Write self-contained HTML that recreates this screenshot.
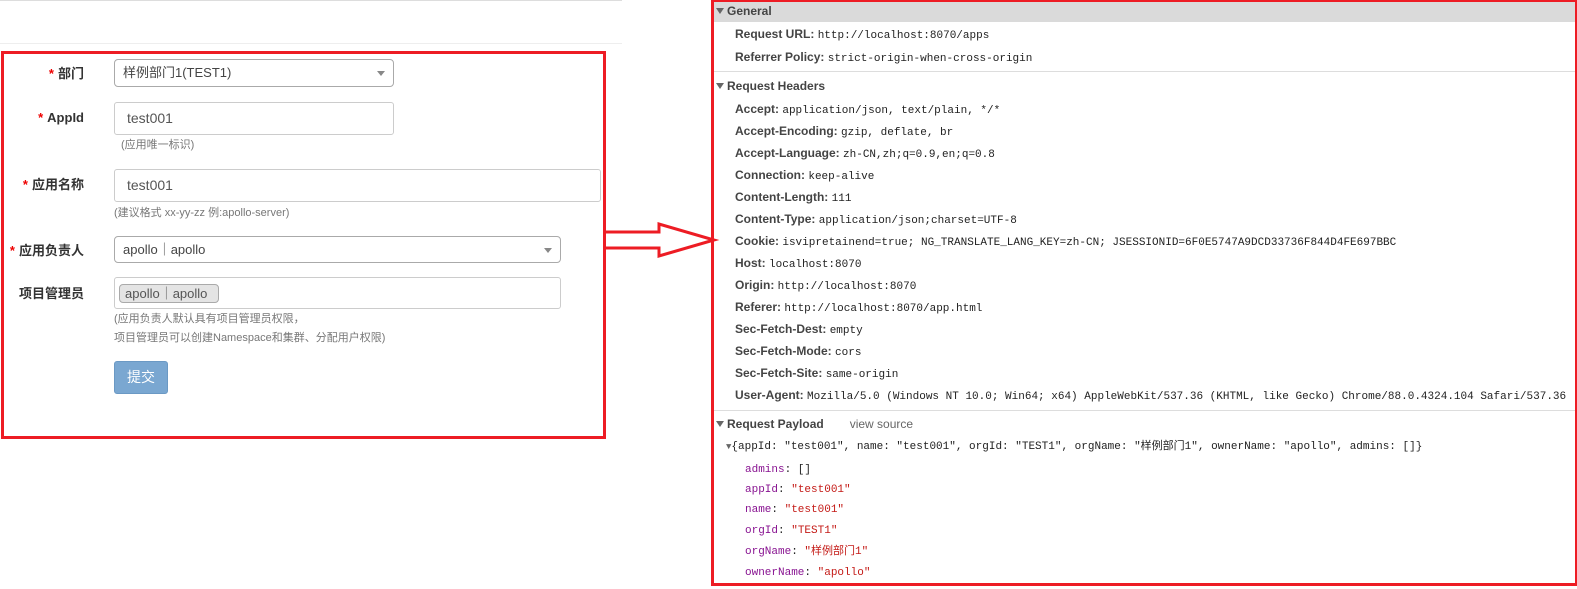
<!DOCTYPE html>
<html><head><meta charset="utf-8"><style>
*{margin:0;padding:0;box-sizing:border-box}
body{width:1577px;height:589px;background:#fff;position:relative;overflow:hidden;font-family:"Liberation Sans","Noto Sans CJK SC",sans-serif;color:#333}
.a{position:absolute;white-space:nowrap}
.lab{position:absolute;right:1493px;font-size:13px;font-weight:bold;color:#333;text-align:right;line-height:16px}
.lab b{color:#e00;margin-right:4px}
.inp{position:absolute;border:1px solid #ccc;border-radius:3px;background:#fff;font-size:14px;color:#555;padding-left:12px}
.sel{position:absolute;border:1px solid #aaa;border-radius:4px;background:#fff;font-size:13px;color:#444;padding-left:8px}
.sel:after{content:"";position:absolute;right:8px;top:11px;border:4px solid transparent;border-top:5px solid #888}
.hint{position:absolute;font-size:11px;color:#777;left:114px;white-space:nowrap;line-height:14px}
.r{position:absolute;left:735px;font-size:12px;color:#303942;white-space:nowrap;line-height:15px}
.r b{font-weight:bold;color:#444}
.r span{font-family:"Liberation Mono","Noto Sans CJK SC",monospace;font-size:11px;color:#222}
.h{position:absolute;left:716px;font-size:12px;font-weight:bold;color:#444;white-space:nowrap;line-height:15px}
.h:before{content:"";display:inline-block;border:4px solid transparent;border-top:6px solid #666;margin-right:3px;vertical-align:-3px}
.p{position:absolute;left:745px;font-family:"Liberation Mono","Noto Sans CJK SC",monospace;font-size:11px;white-space:nowrap;color:#222;line-height:15px;height:15px}
.k{color:#881391}.s{color:#c41a16}
</style></head><body>
<div class="a" style="left:0;top:0;width:622px;height:1px;background:#ddd"></div>
<div class="a" style="left:0;top:43px;width:622px;height:1px;background:#eee"></div>
<div class="a" style="left:1px;top:51px;width:605px;height:388px;border:3px solid #ed1c24"></div>

<div class="lab" style="top:66px"><b>*</b>部门</div>
<div class="sel" style="left:114px;top:59px;width:280px;height:28px;line-height:26px">样例部门1(TEST1)</div>
<div class="lab" style="top:110px"><b>*</b>AppId</div>
<div class="inp" style="left:114px;top:102px;width:280px;height:33px;line-height:31px">test001</div>
<div class="hint" style="left:121px;top:138px">(应用唯一标识)</div>
<div class="lab" style="top:177px"><b>*</b>应用名称</div>
<div class="inp" style="left:114px;top:169px;width:487px;height:33px;line-height:31px">test001</div>
<div class="hint" style="top:206px">(建议格式 xx-yy-zz 例:apollo-server)</div>
<div class="lab" style="top:243px"><b>*</b>应用负责人</div>
<div class="sel" style="left:114px;top:236px;width:447px;height:27px;line-height:25px">apollo｜apollo</div>
<div class="lab" style="top:286px">项目管理员</div>
<div class="inp" style="left:114px;top:277px;width:447px;height:32px"></div>
<div class="a" style="left:119px;top:284px;width:100px;height:19px;border:1px solid #aaa;border-radius:4px;background:#e4e4e4;font-size:13px;color:#555;line-height:17px;padding-left:5px">apollo｜apollo</div>
<div class="hint" style="top:312px">(应用负责人默认具有项目管理员权限，</div>
<div class="hint" style="top:331px">项目管理员可以创建Namespace和集群、分配用户权限)</div>
<div class="a" style="left:114px;top:361px;width:54px;height:33px;background:#7aa7d1;border:1px solid #6b99c4;border-radius:3px;color:#fff;font-size:14px;text-align:center;line-height:31px">提交</div>

<svg class="a" style="left:600px;top:215px" width="120" height="50"><path d="M5 17 H59 V9 L114 25 L59 41 V33 H5" fill="none" stroke="#ed1c24" stroke-width="3"/></svg>

<div class="a" style="left:711px;top:0;width:866px;height:586px;border:3px solid #ed1c24;border-right-width:2px"></div>
<div class="a" style="left:714px;top:2px;width:861px;height:20px;background:#dadada"></div>
<div class="a" style="left:714px;top:71px;width:861px;height:1px;background:#ddd"></div>
<div class="a" style="left:714px;top:410px;width:861px;height:1px;background:#ddd"></div>
<div class="h" style="top:4px">General</div>
<div class="r" style="top:27px"><b>Request URL:</b> <span>http://localhost:8070/apps</span></div>
<div class="r" style="top:50px"><b>Referrer Policy:</b> <span>strict-origin-when-cross-origin</span></div>
<div class="h" style="top:79px">Request Headers</div>
<div class="r" style="top:102px"><b>Accept:</b> <span>application/json, text/plain, */*</span></div>
<div class="r" style="top:124px"><b>Accept-Encoding:</b> <span>gzip, deflate, br</span></div>
<div class="r" style="top:146px"><b>Accept-Language:</b> <span>zh-CN,zh;q=0.9,en;q=0.8</span></div>
<div class="r" style="top:168px"><b>Connection:</b> <span>keep-alive</span></div>
<div class="r" style="top:190px"><b>Content-Length:</b> <span>111</span></div>
<div class="r" style="top:212px"><b>Content-Type:</b> <span>application/json;charset=UTF-8</span></div>
<div class="r" style="top:234px"><b>Cookie:</b> <span>isvipretainend=true; NG_TRANSLATE_LANG_KEY=zh-CN; JSESSIONID=6F0E5747A9DCD33736F844D4FE697BBC</span></div>
<div class="r" style="top:256px"><b>Host:</b> <span>localhost:8070</span></div>
<div class="r" style="top:278px"><b>Origin:</b> <span>http://localhost:8070</span></div>
<div class="r" style="top:300px"><b>Referer:</b> <span>http://localhost:8070/app.html</span></div>
<div class="r" style="top:322px"><b>Sec-Fetch-Dest:</b> <span>empty</span></div>
<div class="r" style="top:344px"><b>Sec-Fetch-Mode:</b> <span>cors</span></div>
<div class="r" style="top:366px"><b>Sec-Fetch-Site:</b> <span>same-origin</span></div>
<div class="r" style="top:388px"><b>User-Agent:</b> <span>Mozilla/5.0 (Windows NT 10.0; Win64; x64) AppleWebKit/537.36 (KHTML, like Gecko) Chrome/88.0.4324.104 Safari/537.36</span></div>
<div class="h" style="top:417px">Request Payload<span style="font-weight:normal;color:#666;margin-left:26px">view source</span></div>
<div class="p" style="left:726px;top:440px"><span style="font-size:9px;color:#666">▼</span>{appId: "test001", name: "test001", orgId: "TEST1", orgName: "样例部门1", ownerName: "apollo", admins: []}</div>
<div class="p" style="top:463px"><span class="k">admins</span>: []</div>
<div class="p" style="top:483px"><span class="k">appId</span>: <span class="s">"test001"</span></div>
<div class="p" style="top:503px"><span class="k">name</span>: <span class="s">"test001"</span></div>
<div class="p" style="top:524px"><span class="k">orgId</span>: <span class="s">"TEST1"</span></div>
<div class="p" style="top:545px"><span class="k">orgName</span>: <span class="s">"样例部门1"</span></div>
<div class="p" style="top:566px"><span class="k">ownerName</span>: <span class="s">"apollo"</span></div>
</body></html>
